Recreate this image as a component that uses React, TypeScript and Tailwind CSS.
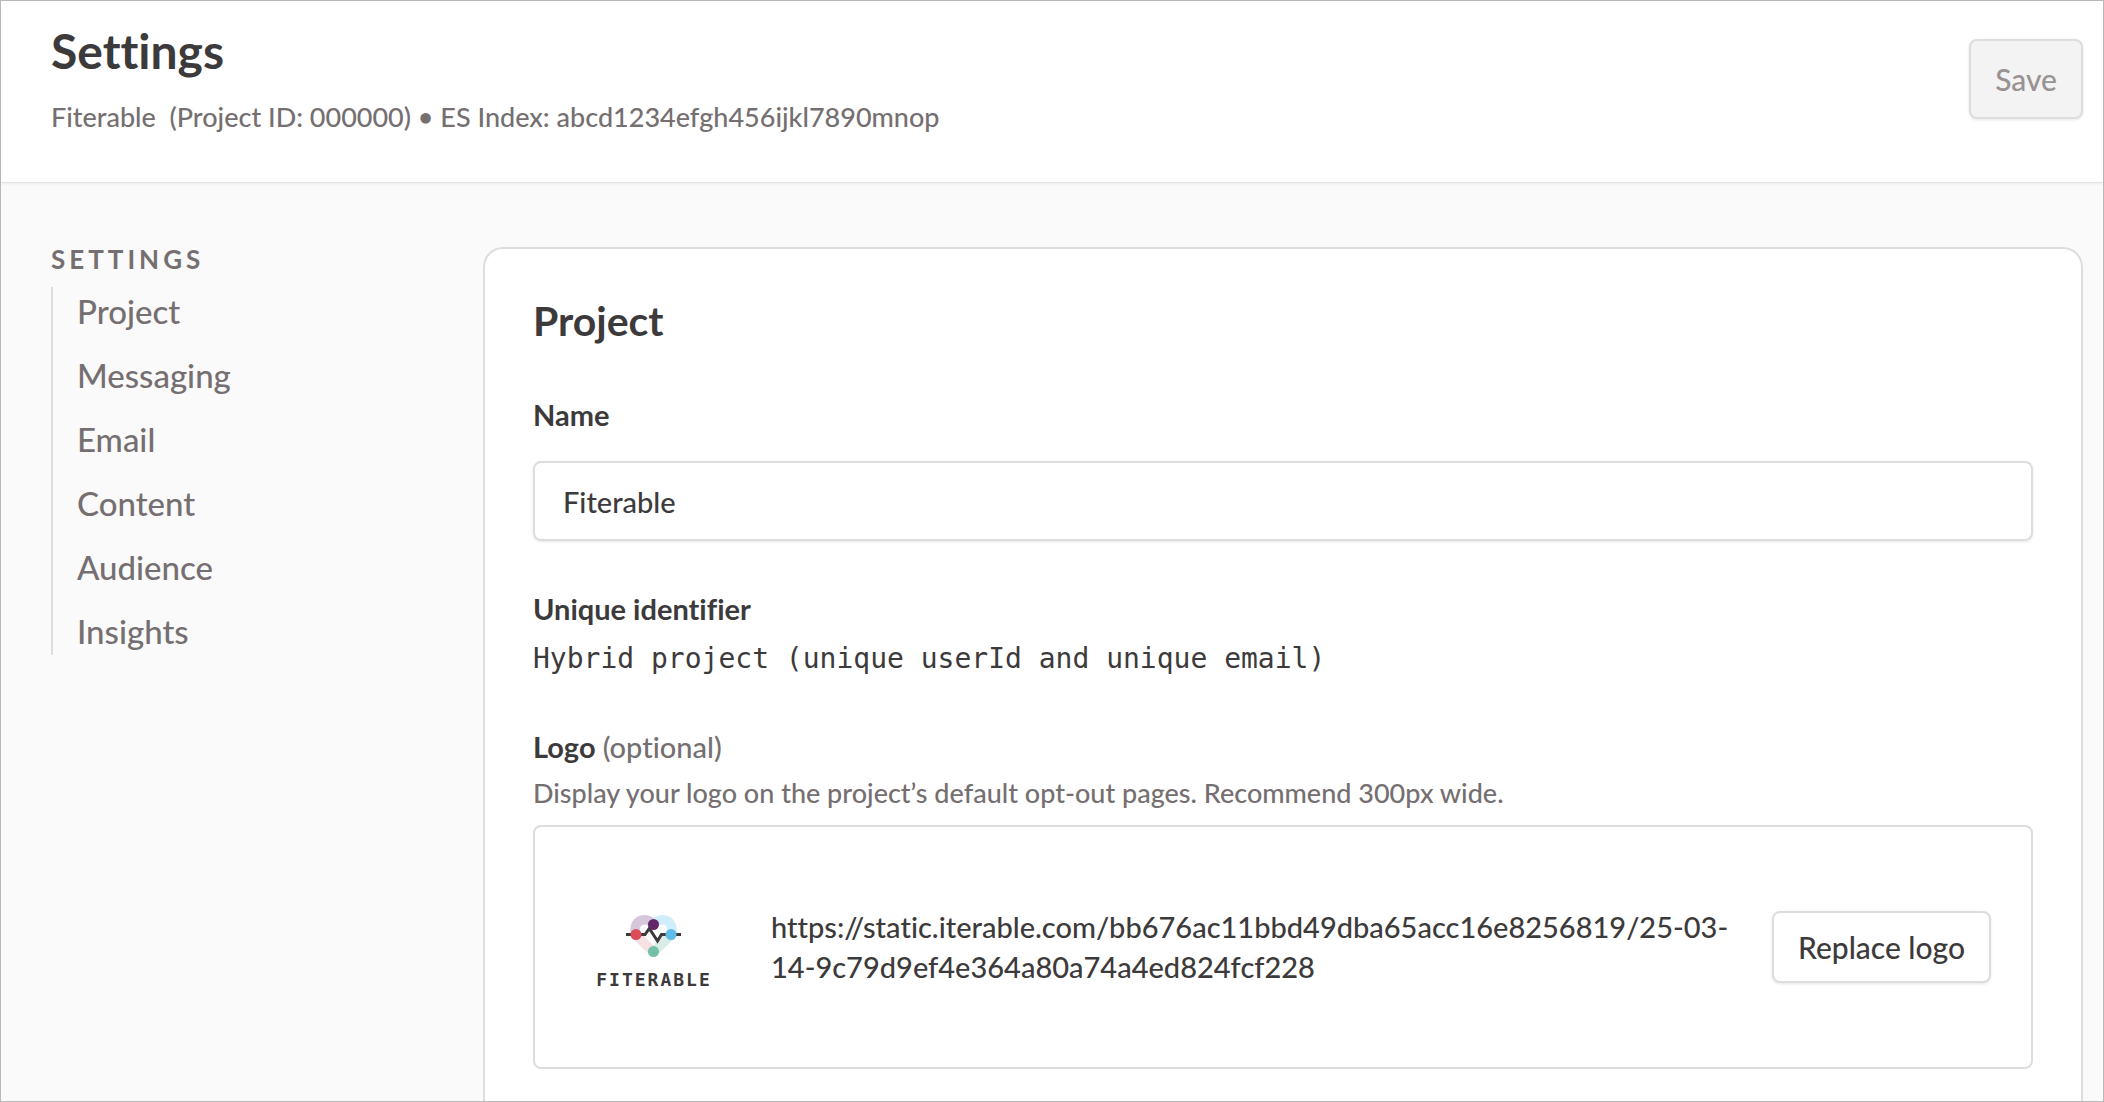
import { useState } from "react";

const sections = ["Project", "Messaging", "Email", "Content", "Audience", "Insights"];

const LOGO_URL =
    "https://static.iterable.com/bb676ac11bbd49dba65acc16e8256819/25-03-14-9c79d9ef4e364a80a74a4ed824fcf228";

const FiterableLogo = () => (
    <div className="flex w-[118px] shrink-0 flex-col items-center gap-3 pt-2.5" role="img" aria-label="Fiterable">
        <svg width="56" height="44" viewBox="0 0 56 44" fill="none" aria-hidden="true">
            <g strokeWidth="9.500">
                <path d="M10 21L27.500 38" stroke="#f8e1e4" />
                <path d="M45 21L27.500 38" stroke="#d9ede7" />
                <path d="M10 21C7 13 11 5.700 18.500 5.700C23 5.700 26 8 28.500 11.500" stroke="#d6c8dc" />
                <path d="M45 21C48 13 44 5.700 36.500 5.700C32 5.700 29 8 26.500 11.500" stroke="#d0edfa" />
            </g>
            <path d="M0 20.500H19L23.300 14.500L31.500 27L35.500 20.500H55" stroke="#3d3a3b" strokeWidth="3" />
            <circle cx="27.500" cy="10.500" r="5.500" fill="#622769" />
            <circle cx="10" cy="20.500" r="5.500" fill="#dd4b58" />
            <circle cx="45" cy="20.500" r="5.500" fill="#60bdea" />
            <circle cx="27.500" cy="37.500" r="5.500" fill="#74bfa8" />
        </svg>
        <span className="font-['DejaVu_Sans_Mono',monospace] text-[18px] leading-5 font-bold tracking-[2px]">
            FITERABLE
        </span>
    </div>
);

const Header = () => (
    <header className="flex items-start justify-between border-b border-[#e2e2e2] bg-white pt-5 pr-5 pb-[45px] pl-[50px] shadow-[0_1px_3px_rgba(0,0,0,0.06)]">
        <div>
            <h1 className="text-[48px] leading-[60px] font-bold">Settings</h1>
            <p className="mt-4 text-[27px] leading-10 font-medium whitespace-pre-wrap text-[#756f71]">
                {"Fiterable  (Project ID: 000000) • ES Index: abcd1234efgh456ijkl7890mnop"}
            </p>
        </div>
        <button
            disabled
            className="mt-[18px] h-20 rounded-lg border-2 border-[#dddddd] bg-[#f3f3f3] px-6 text-[30px] font-medium text-[#989293] shadow-[0_1px_3px_rgba(0,0,0,0.1)]"
        >
            Save
        </button>
    </header>
);

const SideNav = () => (
    <nav className="w-[432px] shrink-0 text-[#756f71]">
        <h2 className="pb-4 text-[26px] leading-6 font-bold tracking-[4px] uppercase">Settings</h2>
        <ul className="flex flex-col gap-4 border-l-2 border-[#dddddd] pl-6">
            {sections.map((section) => (
                <li key={section} className="text-[33px] leading-12 font-medium">
                    <a href={`#${section.toLowerCase()}`}>{section}</a>
                </li>
            ))}
        </ul>
    </nav>
);

const ProjectCard = () => {
    const [name, setName] = useState("Fiterable");

    return (
        <section
            id="project"
            className="min-w-0 flex-1 rounded-t-[20px] border-2 border-b-0 border-[#dddddd] bg-white px-12 pt-12"
        >
            <h2 className="text-[41px] leading-12 font-bold">Project</h2>

            <label htmlFor="project-name" className="mt-[50px] block text-[29px] leading-10 font-bold">
                Name
            </label>
            <input
                id="project-name"
                type="text"
                value={name}
                onChange={(e) => setName(e.target.value)}
                className="mt-[26px] block h-20 w-full rounded-lg border-2 border-[#dddddd] px-7 text-[29px] font-medium shadow-[0_1px_3px_rgba(0,0,0,0.1)]"
            />

            <h3 className="mt-12 text-[29px] leading-10 font-bold">Unique identifier</h3>
            <p className="mt-2.5 font-['DejaVu_Sans_Mono',monospace] text-[28px] leading-10">
                Hybrid project (unique userId and unique email)
            </p>

            <h3 className="mt-12 text-[29px] leading-10 font-bold">
                Logo <span className="font-medium text-[#756f71]">(optional)</span>
            </h3>
            <p className="mt-2 text-[27px] leading-9 font-medium text-[#756f71]">
                Display your logo on the project’s default opt-out pages. Recommend 300px wide.
            </p>
            <div className="mt-3.5 flex h-[244px] items-center rounded-lg border-2 border-[#dddddd] pr-10 pl-[60px]">
                <FiterableLogo />
                <p className="mr-8 ml-[58px] min-w-0 flex-1 text-[29px] leading-10 font-medium">{LOGO_URL}</p>
                <button className="h-[72px] shrink-0 rounded-lg border-2 border-[#dddddd] bg-white px-6 text-[30px] font-medium shadow-[0_1px_3px_rgba(0,0,0,0.1)]">
                    Replace logo
                </button>
            </div>
        </section>
    );
};

export default function App() {
    return (
        <div className="flex h-screen flex-col overflow-hidden border border-[#b8b8b8] bg-[#fafafa] font-['Lato',sans-serif] text-[#3d3a3b] [font-variant-ligatures:none]">
            <Header />
            <main className="flex min-h-0 flex-1 pt-16 pr-5 pl-[50px]">
                <SideNav />
                <ProjectCard />
            </main>
        </div>
    );
}
